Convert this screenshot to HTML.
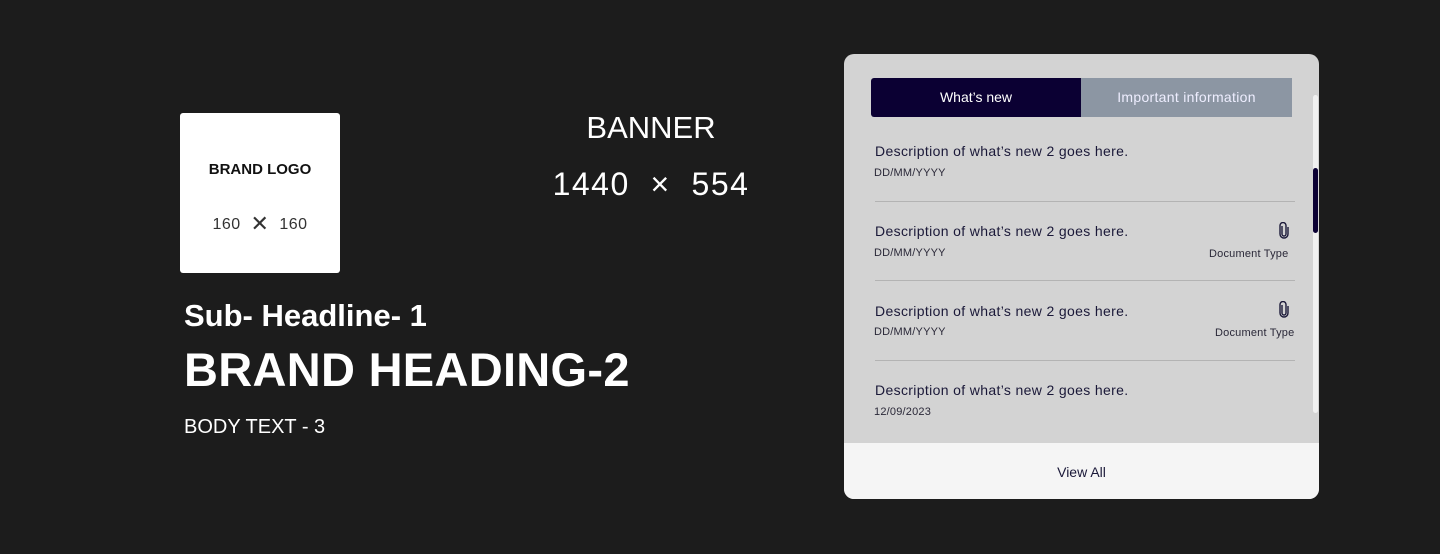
<!DOCTYPE html>
<html><head><meta charset="utf-8"><style>
*{margin:0;padding:0;box-sizing:border-box}
body{width:1440px;height:554px;background:#1c1c1c;position:relative;overflow:hidden;font-family:"Liberation Sans",sans-serif}
.abs{position:absolute;white-space:nowrap}
.logo{left:180px;top:113px;width:160px;height:160px;background:#fff;border-radius:3px}
.panel{left:844px;top:54px;width:475px;height:445px;background:#d3d3d3;border-radius:10px;overflow:hidden}
.desc{font-size:14px;color:#1a1838;left:31px;letter-spacing:0.35px}
.date{font-size:11px;color:#2a2838;left:30px;letter-spacing:0.2px}
.doc{font-size:11px;color:#2a2838;letter-spacing:0.2px}
.hr{left:31px;width:420px;height:1px;background:#b3b3b3}
</style></head><body>
<div class="abs logo">
 <div class="abs" style="left:0;width:160px;text-align:center;top:48px;font-size:15px;font-weight:bold;color:#111">BRAND LOGO</div>
 <div class="abs" style="left:0;width:160px;text-align:center;top:98px;font-size:16px;color:#333;letter-spacing:0.5px">160 &nbsp;<span style="font-size:22px;vertical-align:-2px">✕</span>&nbsp; 160</div>
</div>
<div class="abs" style="left:540px;width:222px;text-align:center;top:110px;font-size:31px;color:#fff">BANNER</div>
<div class="abs" style="left:530px;width:242px;text-align:center;top:166px;font-size:32px;color:#fff;letter-spacing:1.5px">1440 &nbsp;× &nbsp;554</div>
<div class="abs" style="left:184px;top:298px;font-size:31px;font-weight:bold;color:#fff">Sub- Headline- 1</div>
<div class="abs" style="left:184px;top:342px;font-size:47px;font-weight:bold;color:#fff;letter-spacing:0.3px">BRAND HEADING-2</div>
<div class="abs" style="left:184px;top:416px;font-size:20px;color:#fff">BODY TEXT - 3</div>

<div class="abs panel">
 <div class="abs" style="left:27px;top:24px;width:210px;height:39px;background:#0b0033;border-radius:3px 0 0 3px;color:#fff;font-size:14px;text-align:center;line-height:39px">What’s new</div>
 <div class="abs" style="left:237px;top:24px;width:211px;height:39px;background:#8c96a3;color:#eef;font-size:14px;text-align:center;line-height:39px;letter-spacing:0.3px">Important information</div>
 <div class="abs" style="left:469px;top:41px;width:5px;height:318px;background:#f0f0f0;border-radius:3px"></div>
 <div class="abs" style="left:469px;top:114px;width:5px;height:65px;background:#0b0033;border-radius:3px"></div>

 <div class="abs desc" style="top:89px">Description of what’s new 2 goes here.</div>
 <div class="abs date" style="top:113px">DD/MM/YYYY</div>
 <div class="abs hr" style="top:147px"></div>

 <div class="abs desc" style="top:169px">Description of what’s new 2 goes here.</div>
 <div class="abs date" style="top:193px">DD/MM/YYYY</div>
 <svg class="abs" style="left:434px;top:168px" width="12" height="17" viewBox="0 0 12 17"><path d="M4 4v8a2 2 0 0 0 4 0V3.5a3 3 0 0 0-6 0V12a4 4 0 0 0 8 0V5" fill="none" stroke="#1a1838" stroke-width="1.4"/></svg>
 <div class="abs doc" style="left:365px;top:194px">Document Type</div>
 <div class="abs hr" style="top:226px"></div>

 <div class="abs desc" style="top:249px">Description of what’s new 2 goes here.</div>
 <div class="abs date" style="top:272px">DD/MM/YYYY</div>
 <svg class="abs" style="left:434px;top:247px" width="12" height="17" viewBox="0 0 12 17"><path d="M4 4v8a2 2 0 0 0 4 0V3.5a3 3 0 0 0-6 0V12a4 4 0 0 0 8 0V5" fill="none" stroke="#1a1838" stroke-width="1.4"/></svg>
 <div class="abs doc" style="left:371px;top:273px">Document Type</div>
 <div class="abs hr" style="top:306px"></div>

 <div class="abs desc" style="top:328px">Description of what’s new 2 goes here.</div>
 <div class="abs date" style="top:352px">12/09/2023</div>

 <div class="abs" style="left:0;top:389px;width:475px;height:56px;background:#f5f5f5;text-align:center;line-height:58px;font-size:14px;color:#1a1838">View All</div>
</div>
</body></html>
